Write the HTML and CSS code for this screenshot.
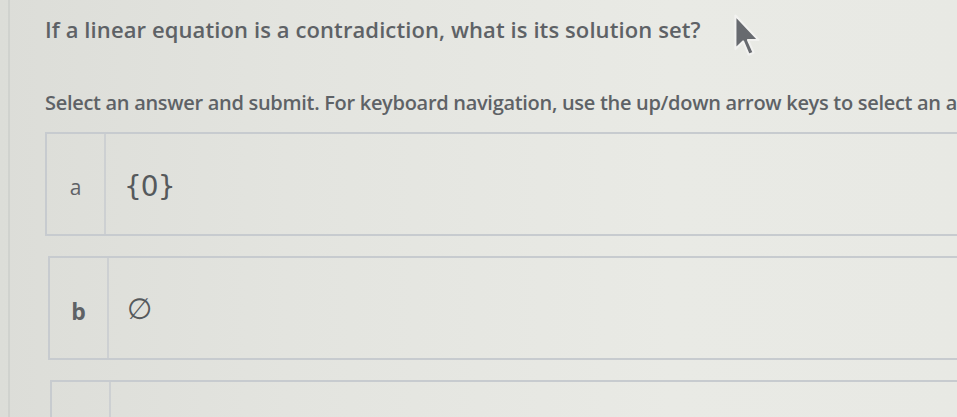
FILE: index.html
```html
<!DOCTYPE html>
<html lang="en">
<head>
    <meta charset="UTF-8">
    <meta name="viewport" content="width=device-width, initial-scale=1.0">
    <title>Question</title>
    <link rel="stylesheet" href="styles.css">
</head>
<body>
    <div class="page">
        <h1 class="question">If a linear equation is a contradiction, what is its solution set?</h1>
        <p class="instructions">Select an answer and submit. For keyboard navigation, use the up/down arrow keys to select an answer.</p>

        <ul class="choices">
            <li class="choice">
                <span class="letter">a</span>
                <span class="answer math">{0}</span>
            </li>
            <li class="choice">
                <span class="letter bold">b</span>
                <span class="answer empty">&#8709;</span>
            </li>
            <li class="choice">
                <span class="letter"></span>
                <span class="answer"></span>
            </li>
        </ul>
    </div>

    <svg class="cursor" width="28" height="45" viewBox="0 0 20 32">
        <path d="M1 1 L1 25 L6.5 19.5 L10.5 29 L14 27.5 L10 18.5 L17.5 18.5 Z" fill="#676a6f" stroke="#f2f2f0" stroke-width="1.5" stroke-linejoin="round"/>
    </svg>
</body>
</html>
```

FILE: styles.css
```css
body {
    margin: 0;
    padding: 0 0 0 8px;
    font-family: 'Open Sans', sans-serif;
    color: #5e6266;
    background: linear-gradient(to right, #dcddd8, #e3e4df 30%, #e9eae5 70%, #e8e9e4);
    overflow: hidden;
    height: 417px;
}
.page {
    border-left: 2px solid #d0d2ce;
    padding-left: 35px;
    height: 100%;
    overflow: hidden;
}
.question {
    margin: 0;
    padding-top: 15px;
    font-size: 22px;
    font-weight: 600;
    letter-spacing: 0.1px;
    line-height: 28px;
}
.instructions {
    margin: 0;
    padding-top: 46px;
    font-size: 20px;
    font-weight: 600;
    letter-spacing: -0.3px;
    line-height: 28px;
    white-space: nowrap;
}
.choices {
    list-style: none;
    margin: 15px -40px 0 0;
    padding: 0;
    display: flex;
    flex-direction: column;
    gap: 20px;
}
.choice {
    display: flex;
    height: 100px;
    border: 2px solid #c7cbcf;
    border-right: none;
}
.choice:nth-child(2) {
    margin-left: 3px;
}
.choice:nth-child(3) {
    margin-left: 5px;
}
.letter {
    width: 57px;
    border-right: 2px solid #cdd0d2;
    display: flex;
    align-items: center;
    justify-content: center;
    font-size: 21px;
    padding-top: 6px;
}
.letter.bold {
    font-weight: 700;
    font-size: 23px;
}
.answer {
    display: flex;
    align-items: center;
    padding-left: 18px;
    color: #55595c;
}
.math {
    font-family: 'DejaVu Sans', sans-serif;
    font-size: 28px;
    letter-spacing: -1px;
    padding-top: 4px;
}
.empty {
    font-family: 'DejaVu Sans', sans-serif;
    font-size: 29px;
    padding-top: 2px;
}
.cursor {
    position: absolute;
    left: 734px;
    top: 14px;
}
```
